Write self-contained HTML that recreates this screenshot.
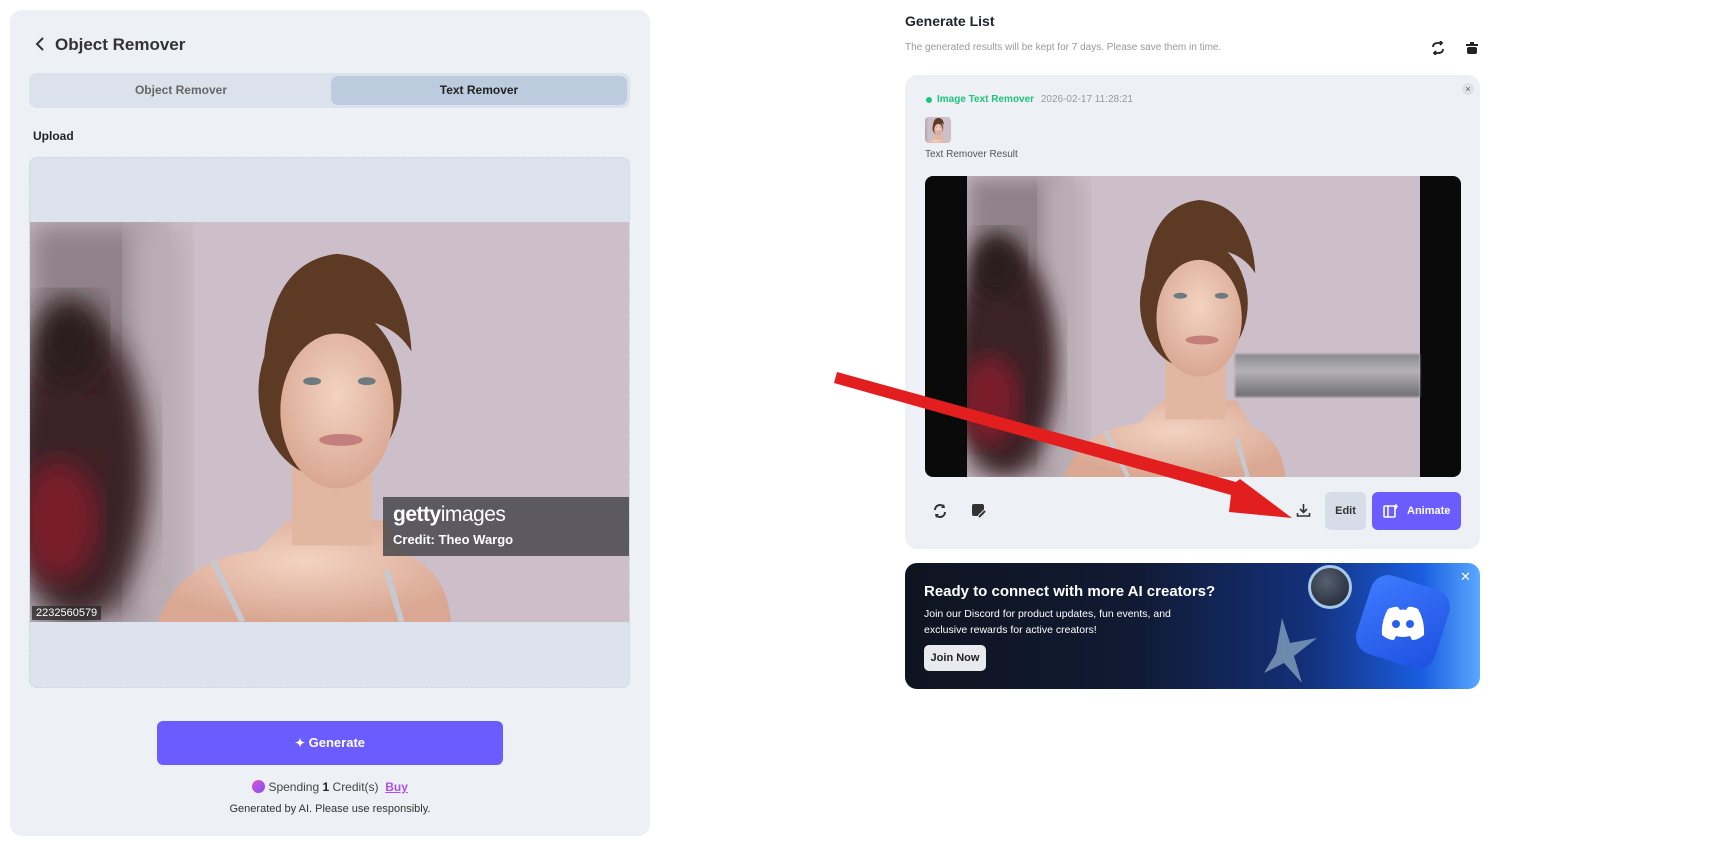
<!DOCTYPE html>
<html><head><meta charset="utf-8"><style>
*{box-sizing:border-box;margin:0;padding:0}
body{width:1728px;height:846px;background:#fff;font-family:"Liberation Sans",sans-serif;position:relative;overflow:hidden;color:#1f2329}
.abs{position:absolute}
.panel{left:10px;top:10px;width:640px;height:826px;background:#edf0f5;border-radius:12px}
.tabs{left:29px;top:73px;width:601px;height:35px;background:#dbe2ec;border-radius:8px}
.tab{top:3px;height:29px;line-height:29px;text-align:center;font-size:12px;font-weight:bold;border-radius:7px}
.up{left:29px;top:157px;width:601px;height:531px;background:#dce3ed;border:1px dashed #cdd6e2;border-radius:8px;overflow:hidden}
.btn{left:157px;top:721px;width:346px;height:44px;background:#6b5cff;border-radius:6px;color:#fff;font-weight:bold;font-size:13px;text-align:center;line-height:44px}
.card{left:911px;top:75px;width:575px;height:474px;background:#edf0f5;border-radius:12px}
.banner{left:911px;top:563px;width:575px;height:126px;border-radius:12px;overflow:hidden;background:linear-gradient(90deg,#0f1420 0%,#111a33 40%,#13307a 70%,#1a5ee0 90%,#5aa8ff 100%)}
</style></head><body>
<svg width="0" height="0" style="position:absolute">
<defs>
<filter id="bl"><feGaussianBlur stdDeviation="14"/></filter>
<radialGradient id="sk" cx="50%" cy="40%" r="60%"><stop offset="0" stop-color="#f3d3c2"/><stop offset="1" stop-color="#d9a792"/></radialGradient>
<symbol id="photo" viewBox="0 0 605 402">
<rect width="605" height="402" fill="#cdbfc9"/>
<rect x="0" y="0" width="130" height="402" fill="#8f8288" filter="url(#bl)"/>
<rect x="100" y="0" width="60" height="402" fill="#b9adb4" filter="url(#bl)"/>
<ellipse cx="50" cy="250" rx="70" ry="150" fill="#3a2226" filter="url(#bl)"/>
<ellipse cx="30" cy="300" rx="40" ry="60" fill="#7a1a2a" filter="url(#bl)"/>
<ellipse cx="40" cy="120" rx="35" ry="45" fill="#2a1a1a" filter="url(#bl)"/>
<path d="M130 402 Q150 340 230 330 L260 300 L360 300 L380 335 Q420 350 425 402 Z" fill="url(#sk)"/>
<rect x="265" y="225" width="80" height="100" fill="#e2b7a2"/>
<ellipse cx="303" cy="170" rx="72" ry="88" fill="#5d3a24"/>
<ellipse cx="310" cy="190" rx="57" ry="78" fill="url(#sk)"/>
<path d="M236 150 Q240 40 310 32 Q380 38 385 130 Q360 90 300 100 Q260 110 245 200 Z" fill="#5d3a24"/>
<ellipse cx="285" cy="160" rx="9" ry="4" fill="#6d7b80"/><ellipse cx="340" cy="160" rx="9" ry="4" fill="#6d7b80"/>
<ellipse cx="314" cy="219" rx="22" ry="6" fill="#c47f7c"/>
<path d="M185 340 L215 402" stroke="#c8c8d0" stroke-width="6"/><path d="M360 350 L375 402" stroke="#c8c8d0" stroke-width="6"/>
</symbol>
</defs></svg>

<div class="abs panel"></div>
<svg class="abs" style="left:33px;top:36px" width="14" height="16" viewBox="0 0 14 16"><path d="M10 2 L4 8 L10 14" fill="none" stroke="#333" stroke-width="2"/></svg>
<div class="abs" style="left:55px;top:35px;font-size:17px;font-weight:bold;color:#333">Object Remover</div>
<div class="abs tabs"><div class="abs tab" style="left:3px;width:298px;color:#666">Object Remover</div><div class="abs tab" style="left:302px;width:296px;background:#bccbdd;color:#222">Text Remover</div></div>
<div class="abs" style="left:33px;top:129px;font-size:12px;font-weight:bold">Upload</div>
<div class="abs up">
<svg class="abs" style="left:-1px;top:64px" width="601" height="400" viewBox="0 0 605 402" preserveAspectRatio="none"><use href="#photo"/></svg>
<div class="abs" style="left:353px;top:339px;width:248px;height:59px;background:rgba(60,60,66,.78)"></div>
<div class="abs" style="left:363px;top:345px;color:#fff;font-size:21px;font-weight:bold;letter-spacing:-.5px">getty<span style="font-weight:normal">images</span></div>
<div class="abs" style="left:363px;top:374px;color:#fff;font-size:13px;font-weight:bold">Credit: Theo Wargo</div>
<div class="abs" style="left:2px;top:448px;background:rgba(40,40,40,.75);color:#fff;font-size:11px;padding:1px 4px">2232560579</div>
</div>
<div class="abs btn"><span style="font-size:12px">✦</span> Generate</div>
<div class="abs" style="left:0;width:660px;top:780px;text-align:center;font-size:12px;color:#444"><span style="display:inline-block;width:13px;height:13px;border-radius:50%;background:linear-gradient(135deg,#e056c8,#7b4dff);vertical-align:-2px"></span> Spending <b style="color:#222">1</b> Credit(s) &nbsp;<u style="color:#b14de8;font-weight:bold">Buy</u></div>
<div class="abs" style="left:0;width:660px;top:803px;text-align:center;font-size:11px;color:#333">Generated by AI. Please use responsibly.</div>

<div class="abs" style="left:-6px;top:0;width:1728px;height:846px">
<div class="abs" style="left:911px;top:13px;font-size:14px;font-weight:bold">Generate List</div>
<div class="abs" style="left:911px;top:42px;font-size:10px;color:#999">The generated results will be kept for 7 days. Please save them in time.</div>
<svg class="abs" style="left:1437px;top:41px" width="14" height="14" viewBox="0 0 14 14"><path d="M2 6 Q2 2 7 2 L11 2 M9 0 L11 2 L9 4 M12 8 Q12 12 7 12 L3 12 M5 10 L3 12 L5 14" fill="none" stroke="#222" stroke-width="1.8"/></svg>
<svg class="abs" style="left:1471px;top:41px" width="14" height="14" viewBox="0 0 14 14"><rect x="5" y="1" width="4" height="2" fill="#222"/><rect x="1" y="3" width="12" height="2" fill="#222"/><rect x="2" y="6" width="10" height="7" rx="2" fill="#222"/></svg>

<div class="abs card"></div>
<div class="abs" style="left:1468px;top:83px;width:12px;height:12px;border-radius:50%;background:#dde2ea;font-size:9px;line-height:12px;text-align:center;color:#555">×</div>
<div class="abs" style="left:932px;top:97px;width:6px;height:6px;border-radius:50%;background:#1fc37a"></div>
<div class="abs" style="left:943px;top:94px;font-size:10px;color:#1fc37a;font-weight:bold">Image Text Remover <span style="color:#999;font-weight:normal;margin-left:4px">2026-02-17 11:28:21</span></div>
<svg class="abs" style="left:931px;top:117px;border-radius:4px" width="26" height="26" viewBox="130 20 350 350" preserveAspectRatio="xMidYMid slice"><use href="#photo" width="605" height="402"/></svg>
<div class="abs" style="left:931px;top:149px;font-size:10px;color:#555">Text Remover Result</div>
<div class="abs" style="left:931px;top:176px;width:536px;height:301px;background:#0a0a0a;border-radius:8px;overflow:hidden">
<svg class="abs" style="left:42px;top:0" width="453" height="301"><use href="#photo"/></svg>
<div class="abs" style="left:310px;top:178px;width:185px;height:43px;background:linear-gradient(180deg,#8a8a8e,#b5b2b5 40%,#6e6e72);filter:blur(1px)"></div>
</div>
<svg class="abs" style="left:938px;top:503px" width="16" height="16" viewBox="0 0 16 16"><path d="M3 7 A5 5 0 0 1 12 4 M13 9 A5 5 0 0 1 4 12" fill="none" stroke="#333" stroke-width="2"/><path d="M12 1 L13 5 L9 5Z M4 15 L3 11 L7 11Z" fill="#333"/></svg>
<svg class="abs" style="left:977px;top:503px" width="16" height="16" viewBox="0 0 16 16"><rect x="1" y="1" width="12" height="12" rx="2" fill="#333"/><path d="M8 14 L14 8" stroke="#edf0f5" stroke-width="4"/><path d="M8 14 L14 8" stroke="#333" stroke-width="2"/></svg>
<svg class="abs" style="left:1302px;top:503px" width="15" height="15" viewBox="0 0 15 15"><path d="M7.5 1 V9 M4 6 L7.5 9.5 L11 6 M1.5 10 V13 H13.5 V10" fill="none" stroke="#333" stroke-width="1.6"/></svg>
<div class="abs" style="left:1331px;top:492px;width:41px;height:38px;background:#d6dde8;border-radius:6px;font-size:11px;font-weight:bold;line-height:38px;text-align:center;color:#333">Edit</div>
<div class="abs" style="left:1378px;top:492px;width:89px;height:38px;background:#6b5cff;border-radius:6px;font-size:11px;font-weight:bold;line-height:38px;color:#fff;padding-left:35px">Animate</div>
<svg class="abs" style="left:1389px;top:503px" width="16" height="16" viewBox="0 0 16 16"><rect x="1" y="3" width="11" height="11" rx="1" fill="none" stroke="#fff" stroke-width="1.6"/><path d="M5 3 V14" stroke="#fff" stroke-width="1.5"/><path d="M13 1 V6 M11 3.5 H15" stroke="#fff" stroke-width="1.3"/></svg>

<div class="abs banner">
<div class="abs" style="left:19px;top:20px;color:#fff;font-size:15px;font-weight:bold">Ready to connect with more AI creators?</div>
<div class="abs" style="left:19px;top:43px;color:#fff;font-size:10.5px;line-height:16px;width:290px">Join our Discord for product updates, fun events, and exclusive rewards for active creators!</div>
<div class="abs" style="left:19px;top:82px;width:62px;height:26px;background:#e9eaee;border-radius:5px;font-size:11px;font-weight:bold;line-height:26px;text-align:center;color:#222">Join Now</div>
<div class="abs" style="left:403px;top:2px;width:44px;height:44px;border-radius:50%;border:3px solid #a8c8e8;background:radial-gradient(circle at 40% 35%,#566070,#1c2230)"></div>
<svg class="abs" style="left:357px;top:55px" width="60" height="65" viewBox="0 0 60 65"><path d="M20 0 L28 25 L55 20 L32 38 L40 65 L22 45 L2 55 L14 35 Z" fill="#7c9ab8" opacity=".85"/></svg>
<div class="abs" style="left:457px;top:18px;width:82px;height:82px;border-radius:18px;background:linear-gradient(135deg,#3f7bff,#1d4fe0);transform:rotate(18deg)"></div>
<svg class="abs" style="left:475px;top:42px" width="46" height="36" viewBox="0 0 46 36"><path d="M8 4 Q15 1 18 2 L20 5 Q23 4 26 5 L28 2 Q32 1 38 4 Q45 16 44 30 Q38 35 32 35 L30 31 Q23 33 16 31 L14 35 Q8 35 2 30 Q1 16 8 4Z" fill="#fff"/><circle cx="16" cy="19" r="4" fill="#2b5ff0"/><circle cx="30" cy="19" r="4" fill="#2b5ff0"/></svg>
<div class="abs" style="left:555px;top:6px;color:#fff;font-size:13px">✕</div>
</div>
</div>

<svg class="abs" style="left:0;top:0" width="1728" height="846"><path d="M834 383 L1231 495 L1229 512 L1292 518 L1240 479 L1236 482 L837 372 Z" fill="#e31e1e"/></svg>
</body></html>
